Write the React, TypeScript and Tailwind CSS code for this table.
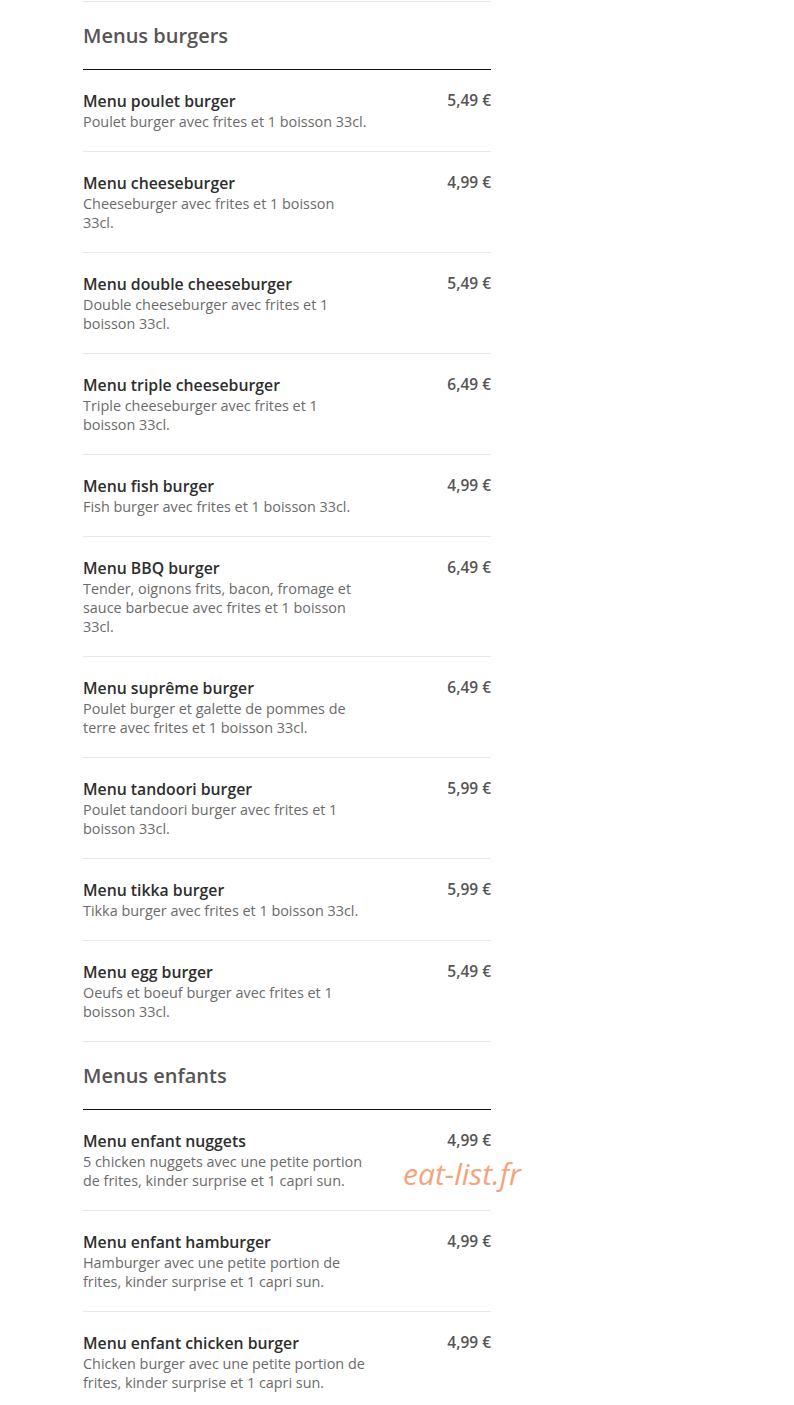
import React from "react";

type Item = { name: string; desc: string; price: string };

const burgers: Item[] = [
  { name: "Menu poulet burger", desc: "Poulet burger avec frites et 1 boisson 33cl.", price: "5,49 €" },
  { name: "Menu cheeseburger", desc: "Cheeseburger avec frites et 1 boisson 33cl.", price: "4,99 €" },
  { name: "Menu double cheeseburger", desc: "Double cheeseburger avec frites et 1 boisson 33cl.", price: "5,49 €" },
  { name: "Menu triple cheeseburger", desc: "Triple cheeseburger avec frites et 1 boisson 33cl.", price: "6,49 €" },
  { name: "Menu fish burger", desc: "Fish burger avec frites et 1 boisson 33cl.", price: "4,99 €" },
  { name: "Menu BBQ burger", desc: "Tender, oignons frits, bacon, fromage et sauce barbecue avec frites et 1 boisson 33cl.", price: "6,49 €" },
  { name: "Menu suprême burger", desc: "Poulet burger et galette de pommes de terre avec frites et 1 boisson 33cl.", price: "6,49 €" },
  { name: "Menu tandoori burger", desc: "Poulet tandoori burger avec frites et 1 boisson 33cl.", price: "5,99 €" },
  { name: "Menu tikka burger", desc: "Tikka burger avec frites et 1 boisson 33cl.", price: "5,99 €" },
  { name: "Menu egg burger", desc: "Oeufs et boeuf burger avec frites et 1 boisson 33cl.", price: "5,49 €" },
];

const enfants: Item[] = [
  { name: "Menu enfant nuggets", desc: "5 chicken nuggets avec une petite portion de frites, kinder surprise et 1 capri sun.", price: "4,99 €" },
  { name: "Menu enfant hamburger", desc: "Hamburger avec une petite portion de frites, kinder surprise et 1 capri sun.", price: "4,99 €" },
  { name: "Menu enfant chicken burger", desc: "Chicken burger avec une petite portion de frites, kinder surprise et 1 capri sun.", price: "4,99 €" },
];

function Row({ item, first }: { item: Item; first: boolean }) {
  return (
    <div className={"flex justify-between pt-[20px] pb-[20px] " + (first ? "" : "border-t border-[#e8e8e8]")}>
      <div className="w-[70%]">
        <div className="text-[15.8px] leading-[22px] font-semibold text-[#2e2e2e]">{item.name}</div>
        <div className="text-[14.4px] leading-[19px] text-[#6b6b6b]">{item.desc}</div>
      </div>
      <div className="text-right text-[15.5px] leading-[20px] font-semibold text-[#555555]">{item.price}</div>
    </div>
  );
}

function Section({ title, items }: { title: string; items: Item[] }) {
  return (
    <div>
      <div className="border-t border-[#e8e8e8] pt-[20px] pb-[19px]">
        <h2 className="text-[20px] leading-[28px] font-semibold text-[#555555]">{title}</h2>
      </div>
      <div className="border-t border-[#111111]">
        {items.map((it, i) => (
          <Row key={it.name} item={it} first={i === 0} />
        ))}
      </div>
    </div>
  );
}

export default function App() {
  return (
    <div
      className="relative min-h-[1405px] w-[794px] bg-white"
      style={{ fontFamily: '"Open Sans", "Liberation Sans", sans-serif' }}
    >
      <div className="ml-[83px] w-[408px] pt-[1px]">
        <Section title="Menus burgers" items={burgers} />
        <Section title="Menus enfants" items={enfants} />
      </div>
      <div className="absolute left-[403px] top-[1154px] text-[30px] leading-[40px] italic text-[#f3a47c]">
        eat-list.fr
      </div>
    </div>
  );
}
